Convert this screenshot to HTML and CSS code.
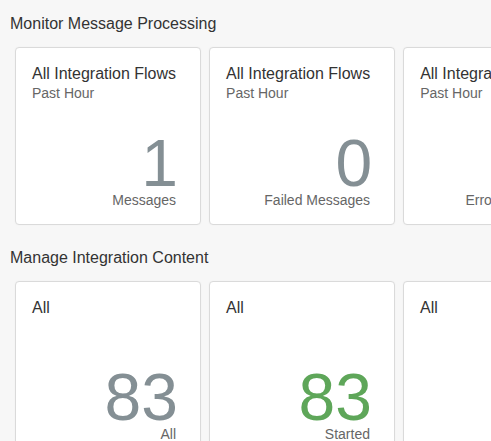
FILE: index.html
```html
<!DOCTYPE html>
<html lang="en">
<head>
<meta charset="utf-8">
<title>Overview</title>
<link rel="stylesheet" href="styles.css">
</head>
<body>
<div class="page">
  <section class="group">
    <h2 class="group-title">Monitor Message Processing</h2>
    <div class="tiles">
      <div class="tile">
        <div class="tile-head">
          <div class="tile-title">All Integration Flows</div>
          <div class="tile-sub">Past Hour</div>
        </div>
        <div class="tile-foot">
          <div class="tile-num">1</div>
          <div class="tile-unit">Messages</div>
        </div>
      </div>
      <div class="tile">
        <div class="tile-head">
          <div class="tile-title">All Integration Flows</div>
          <div class="tile-sub">Past Hour</div>
        </div>
        <div class="tile-foot">
          <div class="tile-num">0</div>
          <div class="tile-unit">Failed Messages</div>
        </div>
      </div>
      <div class="tile">
        <div class="tile-head">
          <div class="tile-title">All Integration Flows</div>
          <div class="tile-sub">Past Hour</div>
        </div>
        <div class="tile-foot">
          <div class="tile-num">0</div>
          <div class="tile-unit">Error Messages</div>
        </div>
      </div>
    </div>
  </section>
  <section class="group group-next">
    <h2 class="group-title">Manage Integration Content</h2>
    <div class="tiles">
      <div class="tile">
        <div class="tile-head">
          <div class="tile-title">All</div>
        </div>
        <div class="tile-foot">
          <div class="tile-num">83</div>
          <div class="tile-unit">All</div>
        </div>
      </div>
      <div class="tile">
        <div class="tile-head">
          <div class="tile-title">All</div>
        </div>
        <div class="tile-foot">
          <div class="tile-num tile-num-good">83</div>
          <div class="tile-unit">Started</div>
        </div>
      </div>
      <div class="tile">
        <div class="tile-head">
          <div class="tile-title">All</div>
        </div>
        <div class="tile-foot">
          <div class="tile-num">0</div>
          <div class="tile-unit">Error</div>
        </div>
      </div>
    </div>
  </section>
</div>
</body>
</html>
```

FILE: styles.css
```css
html, body {
  margin: 0;
  padding: 0;
  background: #f7f7f7;
  overflow: hidden;
}

body {
  font-family: "Liberation Sans", Arial, sans-serif;
  color: #333333;
}

.page {
  padding: 14px 0 0 10px;
}

.group-title {
  margin: 0;
  font-size: 16px;
  font-weight: normal;
  line-height: 19px;
  color: #333333;
}

.group-next {
  margin-top: 23px;
}

.tiles {
  display: flex;
  gap: 8px;
  margin-top: 14px;
  padding-left: 5px;
}

.tile {
  flex: 0 0 186px;
  box-sizing: border-box;
  height: 178px;
  background: #ffffff;
  border: 1px solid #dadada;
  border-radius: 4px;
  box-shadow: 0 0 2px rgba(0, 0, 0, 0.04);
  padding: 16px 24px 15px 16px;
  display: flex;
  flex-direction: column;
  justify-content: space-between;
}

.tile-title {
  font-size: 16px;
  line-height: 20px;
  color: #333333;
  white-space: nowrap;
}

.tile-sub {
  font-size: 14px;
  line-height: 19px;
  color: #666666;
  white-space: nowrap;
}

.tile-foot {
  text-align: right;
}

.tile-num {
  font-size: 66px;
  line-height: 56px;
  color: #848f94;
  margin-right: -2px;
}

.tile-num-good {
  color: #5ea659;
}

.tile-unit {
  font-size: 14px;
  line-height: 18px;
  color: #666666;
  white-space: nowrap;
}
```
